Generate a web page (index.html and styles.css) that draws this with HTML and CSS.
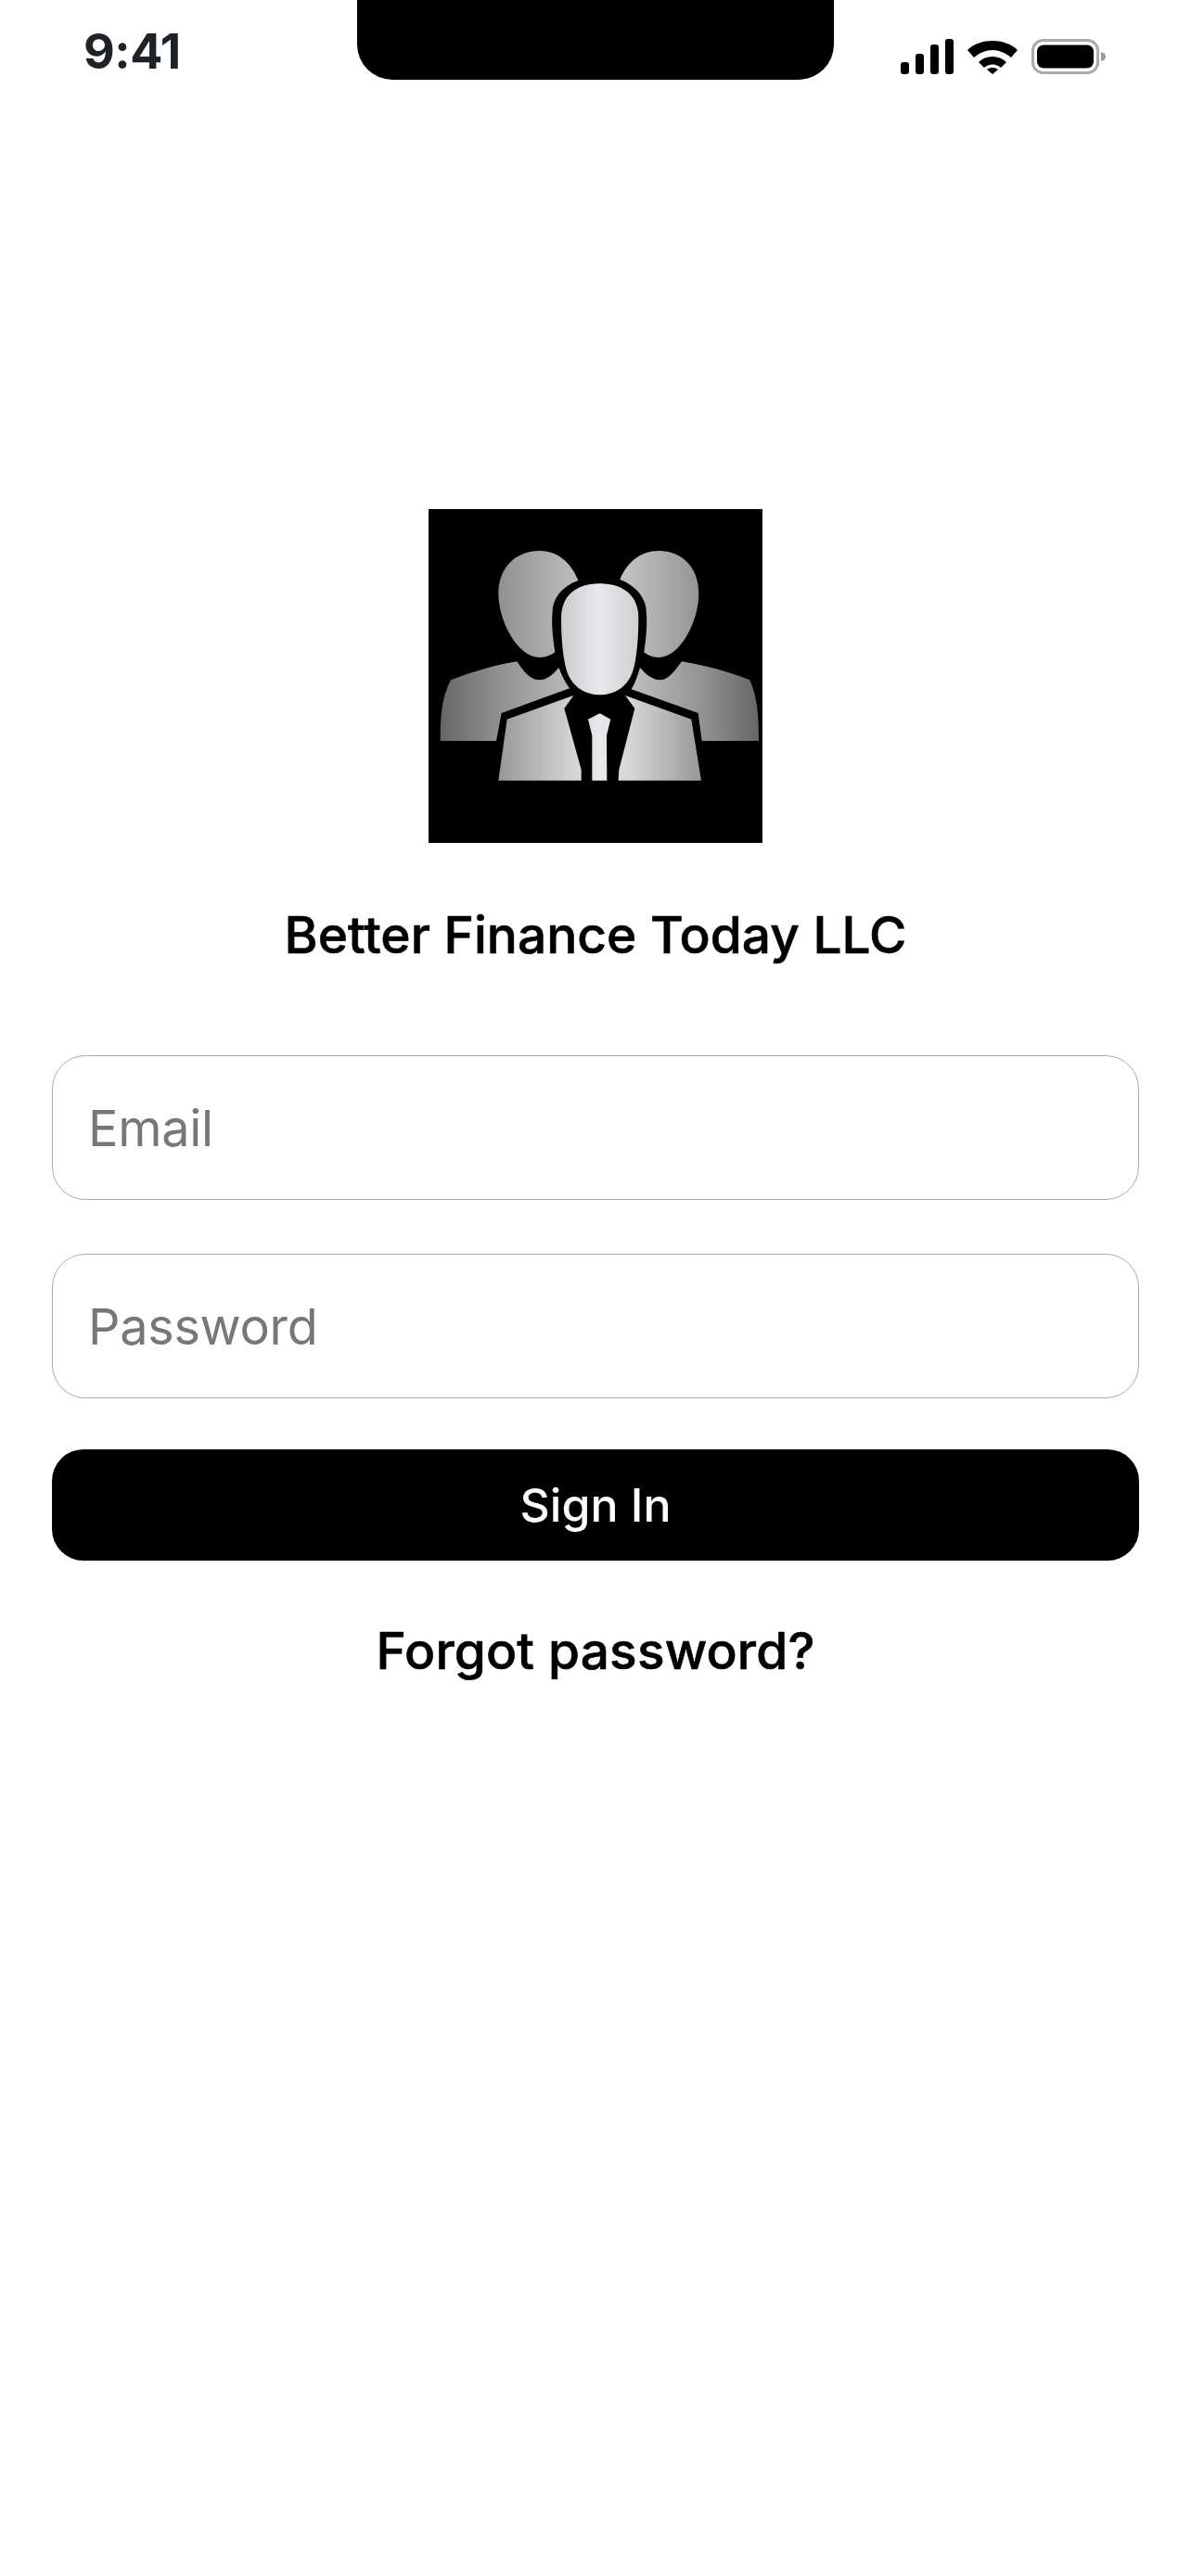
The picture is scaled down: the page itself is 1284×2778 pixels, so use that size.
FILE: index.html
```html
<!DOCTYPE html>
<html lang="en">

<head>
    <meta charset="UTF-8">
    <meta name="viewport" content="width=device-width, initial-scale=1.0">
    <title>Better Finance Today LLC</title>
    <link rel="stylesheet" href="styles.css">
</head>

<body>
    <!--status bar-->
    <div class="status-bar">
        <div class="status-time">9:41</div>
        <div class="notch"></div>
        <div class="status-icons">
            <svg class="icon-signal" width="57" height="38" viewBox="0 0 57 38">
                <rect x="0" y="25" width="9" height="13" rx="3" />
                <rect x="16" y="16" width="9" height="22" rx="3" />
                <rect x="32" y="6" width="9" height="32" rx="3" />
                <rect x="48" y="0" width="9" height="38" rx="3" />
            </svg>
            <svg class="icon-wifi" width="54" height="38" viewBox="0 0 54 38">
                <path d="M0 12C7 5 17 2 27 2S47 5 54 12L47 20C41 15 34 12 27 12S13 15 7 20Z" />
                <path d="M12 25C16 21 21 19 27 19S38 21 42 25L36 31C33.500 29 30.500 27.500 27 27.500S20.500 29 18 31Z" />
                <path d="M21 33C23 31.500 25 31 27 31S31 31.500 33 33L27 38Z" />
            </svg>
            <svg class="icon-battery" width="80" height="38" viewBox="0 0 80 38">
                <rect x="1.500" y="1.500" width="70" height="35" rx="11" fill="none" stroke="#aaa" stroke-width="3" />
                <rect x="6" y="6.500" width="61" height="25" rx="7" />
                <path d="M75 14c3 .5 5 2.500 5 5s-2 4.500-5 5z" fill="#999" />
            </svg>
        </div>
    </div>

    <!--sign in part-->
    <div class="login">
        <svg class="logo" width="360" height="360" viewBox="36 27 1080 1080">
            <defs>
                <linearGradient id="metalBack" gradientUnits="userSpaceOnUse" x1="74" y1="0" x2="1104" y2="0">
                    <stop offset="0" stop-color="#666" />
                    <stop offset="0.18" stop-color="#909090" />
                    <stop offset="0.42" stop-color="#bcbcbc" />
                    <stop offset="0.58" stop-color="#c2c2c2" />
                    <stop offset="0.82" stop-color="#939393" />
                    <stop offset="1" stop-color="#666" />
                </linearGradient>
                <linearGradient id="metalFront" gradientUnits="userSpaceOnUse" x1="262" y1="0" x2="918" y2="0">
                    <stop offset="0" stop-color="#989898" />
                    <stop offset="0.31" stop-color="#cbcbcc" />
                    <stop offset="0.5" stop-color="#e8e9eb" />
                    <stop offset="0.69" stop-color="#cfcfd0" />
                    <stop offset="1" stop-color="#989898" />
                </linearGradient>
            </defs>
            <rect x="36" y="27" width="1080" height="1080" fill="#000" />
            <g fill="url(#metalBack)">
                <!--back heads-->
                <path d="M520 258C495 195 450 162 395 162C320 162 262 215 262 300C262 390 325 507 395 507C415 507 432 500 445 490C438 440 432 400 438 345C445 305 475 275 520 258Z" />
                <path d="M655 255C680 195 725 162 780 162C855 162 910 215 910 300C910 390 850 507 780 507C760 507 745 500 733 490C740 440 745 400 739 345C732 305 700 272 655 255Z" />
                <!--back shoulders-->
                <path d="M108 580C180 552 250 532 322 520C340 545 360 580 395 580C420 580 440 560 457 540C467 565 478 588 492 607L272 687L255 777H74C74 700 78 635 108 580Z" />
                <path d="M1075 580C1005 552 930 532 855 520C835 545 815 580 785 580C760 580 738 560 720 540C712 565 705 590 692 610L908 687L920 777H1104C1104 700 1100 635 1075 580Z" />
            </g>
            <g fill="url(#metalFront)">
                <!--front head-->
                <path d="M590 268C510 268 465 310 465 380C465 440 470 500 480 540C495 600 540 628 590 628C640 628 685 600 700 540C710 500 715 440 715 380C715 310 670 268 590 268Z" />
                <!--jacket and tie-->
                <path d="M505 630L290 707L262 905H530V870L475 672Z" />
                <path d="M672 630L886 707L918 905H650L652 870L703 672Z" />
                <path d="M590 688L625 707L612 760L613 905H565L565 760L552 707Z" />
            </g>
        </svg>

        <h1 class="company-name">Better Finance Today LLC</h1>

        <input class="text-field email-field" type="email" placeholder="Email">
        <input class="text-field password-field" type="password" placeholder="Password">

        <button class="sign-in-button">Sign In</button>
        <a class="forgot-link" href="#">Forgot password?</a>
    </div>
</body>

</html>
```

FILE: styles.css
```css
body {
    margin: 0;
    min-height: 2778px;
    background: #fff;
    font-family: Inter, "Liberation Sans", sans-serif;
}

/* status bar */
.status-bar {
    display: grid;
    grid-template-columns: 1fr 514px 1fr;
    height: 85px;
}

.status-time {
    padding: 26px 0 0 90px;
    font-size: 52px;
    line-height: 60px;
    font-weight: 700;
    letter-spacing: -0.5px;
    color: #1f2328;
}

.notch {
    background: #000;
    border-radius: 0 0 38px 38px;
}

.status-icons {
    display: flex;
    align-items: flex-start;
    justify-content: flex-end;
    gap: 15px;
    padding: 42px 92px 0 0;
}

.status-icons svg {
    display: block;
    flex: none;
}

/* sign in */
.login {
    display: flex;
    flex-direction: column;
    align-items: center;
    padding: 464px 56px 0;
}

.logo {
    display: block;
}

.company-name {
    margin: 64px 0 0;
    font-size: 55px;
    line-height: 70px;
    font-weight: 500;
    -webkit-text-stroke: 0.6px #000;
    color: #000;
}

.text-field {
    box-sizing: border-box;
    width: 100%;
    height: 156px;
    padding: 0 40px 0 38px;
    border: 1.5px solid #aaa;
    border-radius: 36px;
    background: #fff;
    font-family: inherit;
    font-size: 54px;
    font-weight: 400;
    letter-spacing: -0.3px;
    color: #000;
    outline: none;
}

.text-field::placeholder {
    color: #777;
    opacity: 1;
}

.email-field {
    margin-top: 95px;
}

.password-field {
    margin-top: 58px;
}

.sign-in-button {
    width: 100%;
    height: 120px;
    margin-top: 55px;
    border: 0;
    border-radius: 34px;
    background: #000;
    color: #fff;
    font-family: inherit;
    font-size: 50px;
    font-weight: 500;
}

.forgot-link {
    margin-top: 62px;
    font-size: 55px;
    line-height: 70px;
    font-weight: 500;
    -webkit-text-stroke: 0.6px #000;
    letter-spacing: 0.15px;
    color: #000;
    text-decoration: none;
}
```
